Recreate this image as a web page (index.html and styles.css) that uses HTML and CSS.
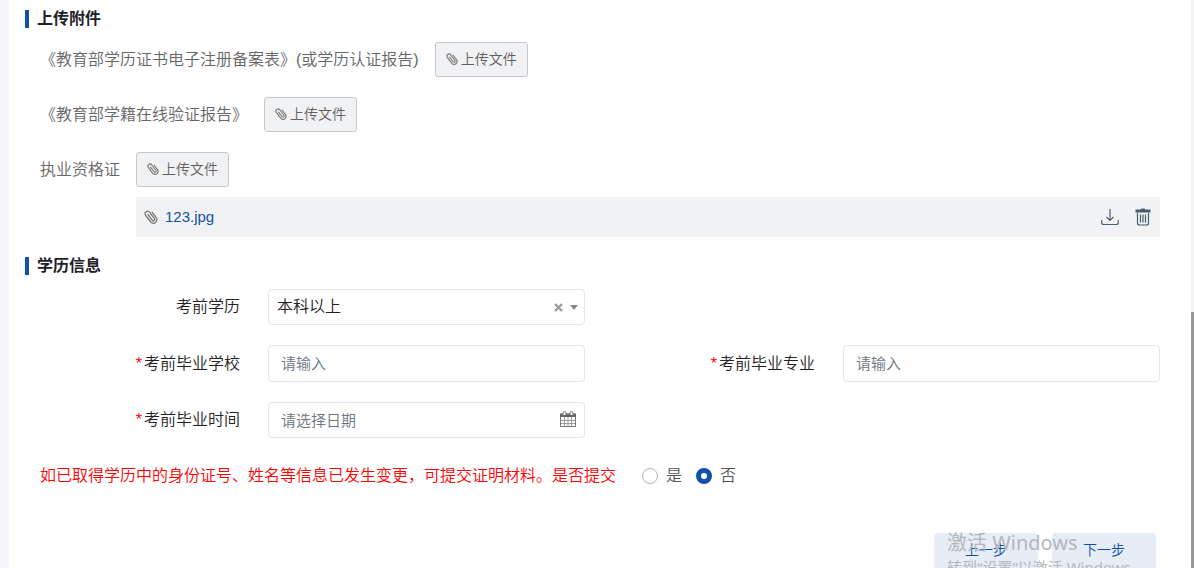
FILE: index.html
```html
<!DOCTYPE html>
<html lang="zh-CN">
<head>
<meta charset="utf-8">
<meta name="viewport" content="width=device-width, initial-scale=1">
<title>学历信息</title>
<link rel="stylesheet" href="styles.css">
</head>
<body>
<svg class="defs" aria-hidden="true">
  <symbol id="clip" viewBox="0 0 14 14">
    <path d="M4.200 4.800 8.200 10.200Q9.200 11.300 10.200 10.500 11.100 9.600 10.300 8.400L5.700 2.300Q4 .2 2 1.700.1 3.300 1.700 5.500L6.800 12Q9 14.400 11.500 12.500 14 10.300 12.200 7.700L8.200 2.300" fill="none" stroke="currentColor" stroke-width="1.300" stroke-linecap="round"/>
  </symbol>
</svg>
<div class="page">
  <form class="content">
    <h2 class="section-title">上传附件</h2>
    <div class="uploads">
      <div class="upload">
        <span class="upload-label">《教育部学历证书电子注册备案表》(或学历认证报告)</span>
        <button type="button" class="upload-btn"><svg class="clip"><use href="#clip"/></svg>上传文件</button>
      </div>
      <div class="upload">
        <span class="upload-label">《教育部学籍在线验证报告》</span>
        <button type="button" class="upload-btn"><svg class="clip"><use href="#clip"/></svg>上传文件</button>
      </div>
      <div class="upload">
        <span class="upload-label">执业资格证</span>
        <button type="button" class="upload-btn"><svg class="clip"><use href="#clip"/></svg>上传文件</button>
      </div>
    </div>
    <div class="file">
      <svg class="clip clip-lg"><use href="#clip"/></svg>
      <a class="file-name" href="#">123.jpg</a>
      <button type="button" class="icon-btn" aria-label="下载">
        <svg width="18" height="18" viewBox="0 0 18 18" fill="none" stroke="#4a6078" stroke-width="1.2"><path d="M9 1v11M5.5 9 9 12.4 12.500 9M.7 12v2.500q0 2 2 2h12.600q2 0 2-2V12"/></svg>
      </button>
      <button type="button" class="icon-btn" aria-label="删除">
        <svg width="16" height="18" viewBox="0 0 16 18" fill="none" stroke="#4a5c70" stroke-width="1.200"><path d="M2.500 5v10q0 2 2 2h7q2 0 2-2V5M5.500 6.500v8M8 6.500v8M10.500 6.500v8"/><path d="M.5 1.500h5q.3-1 1.500-1h2q1.200 0 1.500 1h5v3H.5z" fill="#4a5c70" stroke="none"/></svg>
      </button>
    </div>

    <h2 class="section-title">学历信息</h2>
    <div class="fields">
      <div class="field field-start">
        <label class="label" for="degree">考前学历</label>
        <div class="control">
          <select id="degree" class="box select"><option>本科以上</option></select>
          <div class="select-tools">
            <button type="button" class="clear" aria-label="清除"><svg width="9" height="9" viewBox="0 0 9 9"><path d="M1 1l7 7M8 1 1 8" stroke="#999" stroke-width="2.200"/></svg></button>
            <svg width="8" height="5" viewBox="0 0 8 5"><path d="M0 0h8L4 5z" fill="#888"/></svg>
          </div>
        </div>
      </div>
      <div class="field field-start">
        <label class="label" for="school"><span class="required">*</span>考前毕业学校</label>
        <div class="control"><input id="school" class="box input" type="text" placeholder="请输入"></div>
      </div>
      <div class="field">
        <label class="label" for="major"><span class="required">*</span>考前毕业专业</label>
        <div class="control"><input id="major" class="box input" type="text" placeholder="请输入"></div>
      </div>
      <div class="field field-start">
        <label class="label" for="date"><span class="required">*</span>考前毕业时间</label>
        <div class="control">
          <input id="date" class="box date" type="text" placeholder="请选择日期">
          <svg class="calendar" width="16" height="16" viewBox="0 0 16 16" fill="none" stroke="#777"><path d="M.5 3.500h15v12H.5z"/><path d="M1 9.500h14M1 12.500h14M4.500 6v9M8 6v9M11.500 6v9" stroke="#999"/><path d="M0 2.500h16V6H0z" fill="#666" stroke="none"/><path d="M3 4V1.500q1.500-2.500 3 0V4M10 4V1.500q1.500-2.500 3 0V4" fill="#fff" stroke="#666"/></svg>
        </div>
      </div>
    </div>

    <div class="question" role="radiogroup" aria-labelledby="q">
      <span id="q" class="question-text">如已取得学历中的身份证号、姓名等信息已发生变更，可提交证明材料。是否提交</span>
      <label class="choice"><input class="radio" type="radio" name="submit">是</label>
      <label class="choice"><input class="radio" type="radio" name="submit" checked>否</label>
    </div>

    <div class="actions">
      <button type="button" class="step">上一步</button>
      <button type="button" class="step">下一步</button>
    </div>
  </form>
  <div class="scrollbar"><div class="thumb"></div></div>
  <div class="watermark"><p class="wm-title">激活 Windows</p><p class="wm-text">转到“设置”以激活 Windows。</p></div>
</div>
</body>
</html>
```
FILE: styles.css
```css
* { box-sizing: border-box; }

body {
  margin: 0;
  background: #f4f6fb;
  color: #222;
  font: 16px/24px "Liberation Sans", "Noto Sans CJK SC", sans-serif;
  font-weight: 350;
}

button, input, select { font: inherit; color: inherit; }
button { cursor: pointer; }
.defs { position: absolute; width: 0; height: 0; }

.page {
  position: relative;
  display: flex;
  height: 100vh;
  padding-left: 9px;
  overflow: hidden;
}

.content {
  flex: 1;
  padding: 7px 31px 0 16px;
  background: #fff;
}

.section-title {
  display: flex;
  align-items: center;
  gap: 8px;
  margin: 0;
  font-size: 16px;
  font-weight: 700;
  color: #1d2129;
}
.section-title::before {
  content: "";
  width: 4px;
  height: 18px;
  background: #1151a8;
}

.uploads {
  display: flex;
  flex-direction: column;
  gap: 20px;
  padding: 11px 0 10px 15px;
}
.upload { display: flex; align-items: center; gap: 16px; }
.upload-label { color: #666; }
.upload-btn {
  display: flex;
  align-items: center;
  gap: 3px;
  height: 35px;
  padding: 0 10px 2px;
  border: 1px solid #c5c8cc;
  border-radius: 3px;
  background: #f1f2f4;
  color: #606060;
  font-size: 14px;
}
.clip { width: 12px; height: 12px; color: #777; }
.clip-lg { width: 14px; height: 14px; }

.file {
  display: flex;
  align-items: center;
  height: 40px;
  margin: 0 0 17px 111px;
  padding: 0 9px 0 8px;
  background: #f1f2f4;
}
.file-name {
  flex: 1;
  margin-left: 7px;
  color: #1151a8;
  font-size: 15px;
  font-weight: 400;
  text-decoration: none;
}
.icon-btn {
  display: flex;
  margin-left: 16px;
  padding: 0;
  border: 0;
  background: none;
}

.fields {
  display: grid;
  grid-template-columns: 1fr 1fr;
  gap: 20px 30px;
  padding: 11px 0 0 15px;
}
.field {
  display: grid;
  grid-template-columns: 200px 1fr;
  gap: 28px;
  align-items: center;
}
.field-start { grid-column-start: 1; }
.label { text-align: right; }
.required { margin-right: 2px; color: #f00; }
.control { position: relative; display: flex; }
.box {
  width: 100%;
  height: 36px;
  border: 1px solid #e4e6e8;
  border-radius: 4px;
  background: #fff;
}
.select { appearance: none; padding: 0 48px 0 8px; }
.input { height: 37px; padding: 0 12px; font-size: 15px; }
.date { padding: 0 40px 0 12px; font-size: 15px; }
.box::placeholder { color: #6c757d; opacity: 1; }
.select-tools {
  position: absolute;
  top: 0;
  bottom: 0;
  right: 7px;
  display: flex;
  align-items: center;
  gap: 7px;
}
.clear { display: flex; padding: 0; border: 0; background: none; }
.calendar { position: absolute; top: 9px; right: 9px; }

.question {
  display: flex;
  align-items: center;
  padding: 26px 0 0 15px;
  color: #555;
}
.question-text { margin-right: 26px; color: #f00; }
.choice {
  display: flex;
  align-items: center;
  gap: 8px;
  margin-right: 14px;
}
.radio {
  appearance: none;
  width: 16px;
  height: 16px;
  margin: 0;
  border: 1px solid #adb5bd;
  border-radius: 50%;
  background: #fff;
}
.radio:checked { border: 5px solid #1151a8; }

.actions {
  display: flex;
  justify-content: flex-end;
  gap: 14px;
  padding: 45px 4px 0 0;
}
.step {
  width: 104px;
  height: 36px;
  padding: 0 0 2px;
  border: 0;
  border-radius: 4px;
  background: #e7edf6;
  color: #1151a8;
  font-size: 14px;
}

.scrollbar {
  display: flex;
  flex-direction: column;
  justify-content: flex-end;
  width: 3px;
  background: #f3f3f3;
}
.thumb { height: 45%; background: #999; }

.watermark {
  position: absolute;
  top: 529px;
  left: 947px;
  color: #b4b7bb;
  font-family: "Noto Sans", "Noto Sans CJK SC", sans-serif;
  font-weight: 400;
  white-space: nowrap;
  pointer-events: none;
}
.wm-title { margin: 0; font-size: 20px; line-height: 28px; }
.wm-text { margin: 0; font-size: 15px; line-height: 20px; }
```
